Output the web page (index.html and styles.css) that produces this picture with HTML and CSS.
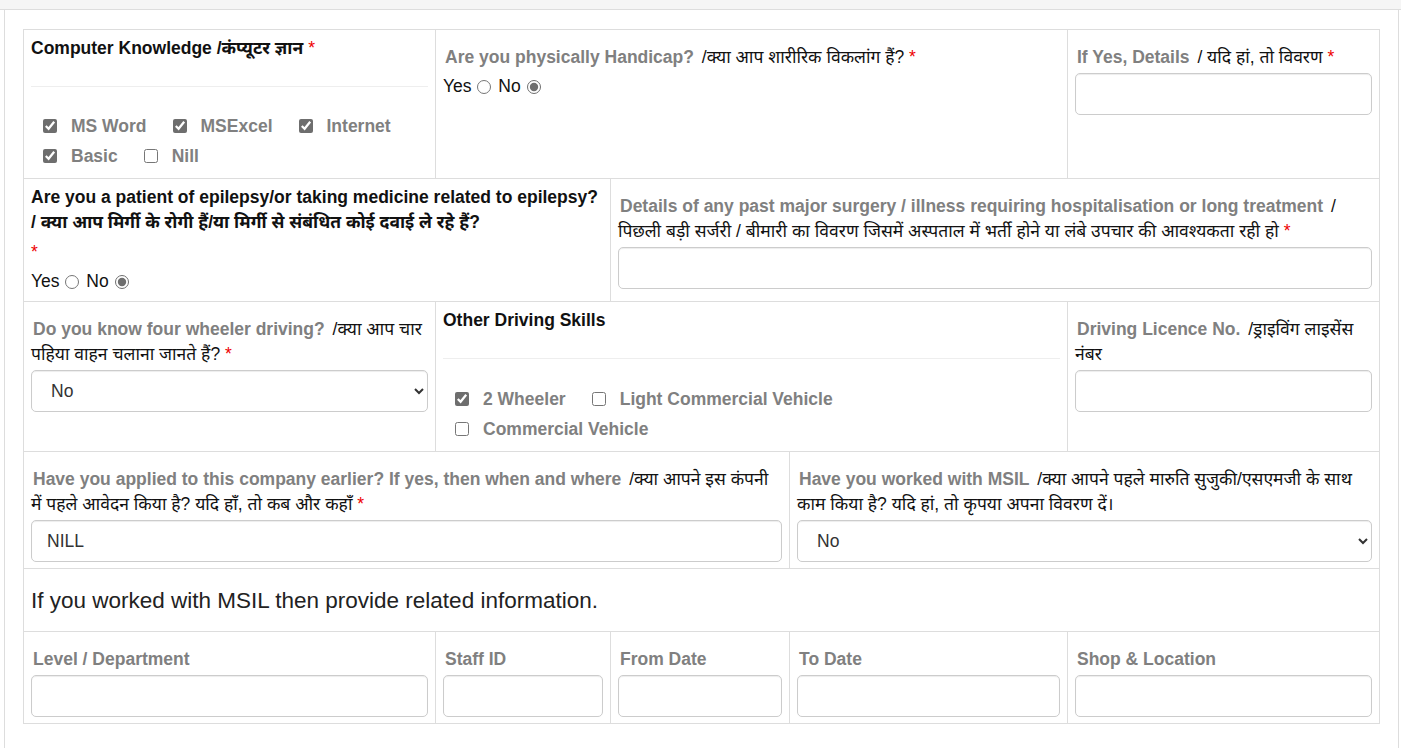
FILE: index.html
```html
<!DOCTYPE html>
<html lang="hi">
<head>
<meta charset="utf-8">
<title>Application Form</title>
<link rel="stylesheet" href="styles.css">
</head>
<body>
<div class="topband"></div>
<div class="panel">
  <table class="grid">
    <colgroup>
      <col class="c1"><col class="c2"><col class="c3"><col class="c4"><col class="c5">
    </colgroup>
    <tr class="r1">
      <td>
        <div class="head">Computer Knowledge /कंप्यूटर ज्ञान <span class="req">*</span></div>
        <hr class="sep">
        <div class="chk-row">
          <label class="chk"><input type="checkbox" checked><span>MS Word</span></label>
          <label class="chk"><input type="checkbox" checked><span>MSExcel</span></label>
          <label class="chk"><input type="checkbox" checked><span>Internet</span></label>
        </div>
        <div class="chk-row">
          <label class="chk"><input type="checkbox" checked><span>Basic</span></label>
          <label class="chk"><input type="checkbox"><span>Nill</span></label>
        </div>
      </td>
      <td colspan="3">
        <div class="lbl"><span class="q">Are you physically Handicap?</span> /क्या आप शारीरिक विकलांग हैं? <span class="req">*</span></div>
        <div class="radios">Yes <input type="radio" name="ph"> No <input type="radio" name="ph" checked></div>
      </td>
      <td>
        <div class="lbl"><span class="q">If Yes, Details</span> / यदि हां, तो विवरण <span class="req">*</span></div>
        <input class="form-control" type="text">
      </td>
    </tr>
    <tr class="r2">
      <td colspan="2">
        <div class="head">Are you a patient of epilepsy/or taking medicine related to epilepsy?<br>/ क्या आप मिर्गी के रोगी हैं/या मिर्गी से संबंधित कोई दवाई ले रहे हैं?</div>
        <div class="req-line"><span class="req">*</span></div>
        <div class="radios">Yes <input type="radio" name="ep"> No <input type="radio" name="ep" checked></div>
      </td>
      <td colspan="3">
        <div class="lbl"><span class="q">Details of any past major surgery / illness requiring hospitalisation or long treatment</span> /<br>पिछली बड़ी सर्जरी / बीमारी का विवरण जिसमें अस्पताल में भर्ती होने या लंबे उपचार की आवश्यकता रही हो <span class="req">*</span></div>
        <input class="form-control" type="text">
      </td>
    </tr>
    <tr class="r3">
      <td>
        <div class="lbl"><span class="q">Do you know four wheeler driving?</span> /क्या आप चार<br>पहिया वाहन चलाना जानते हैं? <span class="req">*</span></div>
        <select class="form-control"><option>No</option><option>Yes</option></select>
      </td>
      <td colspan="3">
        <div class="head">Other Driving Skills</div>
        <hr class="sep sep-lg">
        <div class="chk-row">
          <label class="chk"><input type="checkbox" checked><span>2 Wheeler</span></label>
          <label class="chk"><input type="checkbox"><span>Light Commercial Vehicle</span></label>
        </div>
        <div class="chk-row">
          <label class="chk"><input type="checkbox"><span>Commercial Vehicle</span></label>
        </div>
      </td>
      <td>
        <div class="lbl"><span class="q">Driving Licence No.</span> /ड्राइविंग लाइसेंस<br>नंबर</div>
        <input class="form-control" type="text">
      </td>
    </tr>
    <tr class="r4">
      <td colspan="3">
        <div class="lbl"><span class="q">Have you applied to this company earlier? If yes, then when and where</span> /क्या आपने इस कंपनी<br>में पहले आवेदन किया है? यदि हाँ, तो कब और कहाँ <span class="req">*</span></div>
        <input class="form-control" type="text" value="NILL">
      </td>
      <td colspan="2">
        <div class="lbl"><span class="q">Have you worked with MSIL</span> /क्या आपने पहले मारुति सुजुकी/एसएमजी के साथ<br>काम किया है? यदि हां, तो कृपया अपना विवरण दें।</div>
        <select class="form-control"><option>No</option><option>Yes</option></select>
      </td>
    </tr>
    <tr class="r5">
      <td colspan="5" class="title-cell">
        <h4 class="title">If you worked with MSIL then provide related information.</h4>
      </td>
    </tr>
    <tr class="r6">
      <td>
        <div class="lbl"><span class="q">Level / Department</span></div>
        <input class="form-control" type="text">
      </td>
      <td>
        <div class="lbl"><span class="q">Staff ID</span></div>
        <input class="form-control" type="text">
      </td>
      <td>
        <div class="lbl"><span class="q">From Date</span></div>
        <input class="form-control" type="text">
      </td>
      <td>
        <div class="lbl"><span class="q">To Date</span></div>
        <input class="form-control" type="text">
      </td>
      <td>
        <div class="lbl"><span class="q">Shop &amp; Location</span></div>
        <input class="form-control" type="text">
      </td>
    </tr>
  </table>
</div>
</body>
</html>
```

FILE: styles.css
```css
html, body {
  margin: 0;
  padding: 0;
  background: #fff;
}

body {
  font-family: "Liberation Sans", Arial, "Noto Sans Devanagari", "Lohit Devanagari", "Mangal", sans-serif;
  font-size: 17.5px;
  color: #111;
}

.topband {
  height: 9px;
  background: #f5f5f5;
  border-bottom: 1px solid #ddd;
}

.panel {
  margin: 0 2px 0 4px;
  border: 1px solid #ddd;
  border-top: 0;
  padding: 19px 18px 40px;
}

.grid {
  border-collapse: collapse;
  table-layout: fixed;
  width: 1357px;
}

.c1 { width: 412px; }
.c2 { width: 175px; }
.c3 { width: 179px; }
.c4 { width: 278px; }
.c5 { width: 312px; }

.grid td {
  border: 1px solid #ddd;
  padding: 6px 7px;
  vertical-align: top;
}

.r1 { height: 149px; }
.r2 { height: 123px; }
.r3 { height: 150px; }
.r4 { height: 117px; }
.r5 { height: 63px; }
.r6 { height: 91px; }

.head {
  font-weight: bold;
  line-height: 25px;
  color: #111;
}

.head .req {
  font-weight: normal;
}

.lbl {
  margin: 9px 0 3px;
  line-height: 25px;
  color: #111;
}

.lbl .q {
  color: #808080;
  font-weight: bold;
  padding: 0 3px 0 2px;
}

.req {
  color: #e00;
}

.req-line {
  margin-top: 5px;
  line-height: 25px;
}

.radios {
  margin-top: 4px;
  line-height: 25px;
  color: #111;
}

.radios input {
  width: 14px;
  height: 14px;
  margin: 0 2px 0 1px;
  vertical-align: -2px;
  accent-color: #6e6e6e;
}

.sep {
  border: 0;
  border-top: 1px solid #eee;
  margin: 25px 0 24px;
  height: 0;
}

.sep-lg {
  margin-bottom: 25px;
}

.chk-row {
  display: flex;
  column-gap: 14px;
  height: 30px;
  align-items: center;
}

.chk {
  display: flex;
  align-items: center;
  padding-left: 12px;
  color: #808080;
  font-weight: bold;
}

.chk input {
  width: 14px;
  height: 14px;
  margin: 0 14px 0 0;
  accent-color: #6e6e6e;
}

.form-control {
  display: block;
  width: 100%;
  height: 42px;
  box-sizing: border-box;
  border: 1px solid #ccc;
  border-radius: 5px;
  padding: 7px 15px;
  font-family: inherit;
  font-size: 17.5px;
  color: #333;
  background: #fff;
  box-shadow: inset 0 1px 1px rgba(0, 0, 0, 0.075);
  margin: 0;
}

.title-cell {
  vertical-align: top;
}

.title {
  margin: 13px 0 0;
  font-size: 22.5px;
  font-weight: normal;
  line-height: 25px;
  color: #222;
}
```
